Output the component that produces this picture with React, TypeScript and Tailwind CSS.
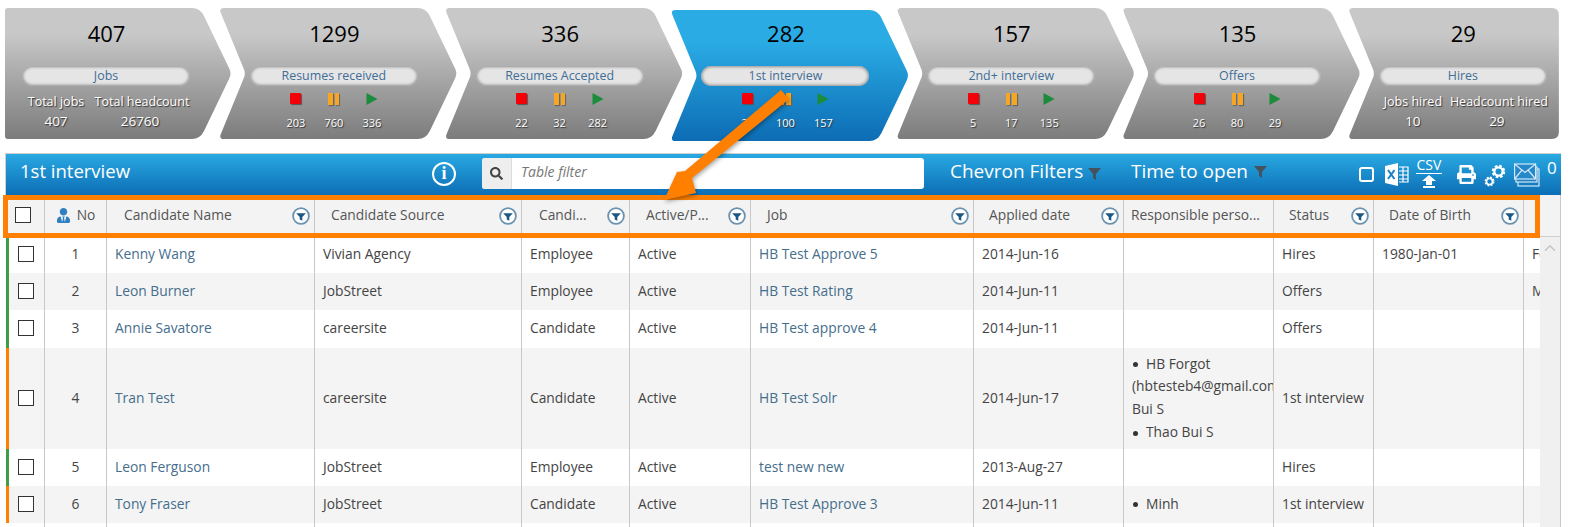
import { FaPrint, FaSearch, FaUserTie } from "react-icons/fa";
import { ChevronUp } from "lucide-react";

const FONT = "font-['Open_Sans','Liberation_Sans',sans-serif]";

const steps = [
  { count: 407, label: "Jobs", kind: "first", totals: [["Total jobs", "407"], ["Total headcount", "26760"]] },
  { count: 1299, label: "Resumes received", kind: "mid", stats: ["203", "760", "336"] },
  { count: 336, label: "Resumes Accepted", kind: "mid", stats: ["22", "32", "282"] },
  { count: 282, label: "1st interview", kind: "mid", active: true, stats: ["25", "100", "157"] },
  { count: 157, label: "2nd+ interview", kind: "mid", stats: ["5", "17", "135"] },
  { count: 135, label: "Offers", kind: "mid", stats: ["26", "80", "29"] },
  { count: 29, label: "Hires", kind: "last", totals: [["Jobs hired", "10"], ["Headcount hired", "29"]] },
];

// shapes of the chevrons
const firstShape = "[clip-path:path('M3_0L187_0Q195_0_199_8L224_60Q227_65.5_224_71L199_123Q195_131_187_131L3_131Q0_131_0_128L0_3Q0_0_3_0Z')]";
const midShape = "[clip-path:path('M4_0L198_0Q206_0_210_8L235_60Q238_65.5_235_71L210_123Q206_131_198_131L4_131Q-1_131_1_126L24_70Q26_65.5_24_61L1_5Q-1_0_4_0Z')]";
const lastShape = "[clip-path:path('M4_0L203_0Q210_0_210_7L210_124Q210_131_203_131L4_131Q-1_131_1_126L24_70Q26_65.5_24_61L1_5Q-1_0_4_0Z')]";

function Chevron({ step }: any) {
  const shape = step.kind === "first" ? firstShape : step.kind === "last" ? lastShape : midShape;
  const width = step.kind === "first" ? "w-[226px] pl-[17px]" : step.kind === "last" ? "w-[210px] pl-[30px] -ml-[11.2px]" : "w-[237px] pl-[30px] -ml-[11.2px]";
  return (
    <div className={`relative h-[131px] shrink-0 ${width}`}>
      <div
        className={`absolute inset-x-0 h-[131px] ${shape} ${
          step.active
            ? "top-[2px] bg-linear-to-b from-[#2aabe4] from-25% to-[#0d6cb4]"
            : "top-0 bg-linear-to-b from-[#c8c8c8] from-20% to-[#7c7c7c]"
        }`}
      />
      <div className="relative w-[168px]">
        <div className="mt-[9px] h-[41px] pl-px pt-px text-center text-[22px] leading-[30px] text-black">{step.count}</div>
        <div className="mt-[8px] h-[20px] rounded-full bg-[#e5e5e5] text-center text-[12.4px] leading-[20px] text-[#3f6d96] shadow-[inset_0_0_3px_1px_#8f8f8f]">
          {step.label}
        </div>
        {step.stats ? (
          <div className="mx-auto w-[114px]">
            <div className="mt-[7px] grid h-[12px] grid-cols-3 justify-items-center">
              <span className="h-[11px] w-[11px] rounded-[1px] bg-[#f40009] shadow-[1px_1px_1px_#555]" />
              <span className="flex h-[12px] gap-[2px]">
                <span className="h-full w-[4.5px] bg-[#f6a623] shadow-[1px_1px_1px_#666]" />
                <span className="h-full w-[4.5px] bg-[#f6a623] shadow-[1px_1px_1px_#666]" />
              </span>
              <svg width="12" height="12" viewBox="0 0 12 12"><path d="M0.5 0 L11.5 6 L0.5 12 Z" fill="#1b8c3c" /></svg>
            </div>
            <div className="mt-[10px] grid grid-cols-3 text-center text-[11px] leading-[16px] text-white [text-shadow:1px_1px_1px_#333]">
              {step.stats.map((s: string, i: number) => <span key={i}>{s}</span>)}
            </div>
          </div>
        ) : (
          <div className="mt-[6px] grid grid-cols-[68px_100px] whitespace-nowrap text-center text-white [text-shadow:1px_1px_1px_#333]">
            <div className="flex justify-center text-[12.5px] leading-[19px]">{step.totals[0][0]}</div>
            <div className="flex justify-center pl-[4px] text-[12.5px] leading-[19px]">{step.totals[1][0]}</div>
            <div className="text-[13.5px] leading-[20px]">{step.totals[0][1]}</div>
            <div className="text-[13.5px] leading-[20px]">{step.totals[1][1]}</div>
          </div>
        )}
      </div>
    </div>
  );
}

function Funnel({ className }: any) {
  return (
    <svg className={className} width="13" height="13" viewBox="0 0 13 13">
      <path d="M0 1 H13 L8 7 V13 L5 11 V7 Z" fill="#44525e" />
    </svg>
  );
}

function FilterIcon() {
  return (
    <svg width="18" height="18" viewBox="0 0 18 18" className="shrink-0">
      <circle cx="9" cy="9" r="7.9" fill="#fff" stroke="#6b93b0" strokeWidth="1.8" />
      <path d="M4.2 6.2 H13.8 L10.3 10 V13.8 L7.7 12.6 V10 Z" fill="#1c5885" />
    </svg>
  );
}

function Gear({ size, className }: any) {
  return (
    <svg className={className} width={size} height={size} viewBox="0 0 20 20">
      <circle cx="10" cy="10" r="7.5" fill="none" stroke="#fff" strokeWidth="3" strokeDasharray="3.4 2.5" />
      <circle cx="10" cy="10" r="5.5" fill="none" stroke="#fff" strokeWidth="3" />
    </svg>
  );
}

function ToolbarIcons() {
  return (
    <div className="relative flex h-full items-center">
      <span className="ml-[92px] h-[15px] w-[15px] rounded-[3px] border-2 border-white" />
      <svg className="ml-[11px]" width="24" height="23" viewBox="0 0 24 23">
        <path d="M0 3 L13 0 V23 L0 20 Z" fill="#fff" />
        <path d="M3 7 L9.5 16 M9.5 7 L3 16" stroke="#1a7fc4" strokeWidth="2" />
        <path d="M14 4 H23 V19 H14 M14 8 H23 M14 12 H23 M14 16 H23 M18 4 V19" stroke="#fff" strokeWidth="1.2" fill="none" />
      </svg>
      <div className="ml-[7px] -mt-[3px] flex w-[26px] flex-col items-center text-white">
        <span className="h-[15px] text-[14px] leading-[14px]">CSV</span>
        <span className="h-px w-[26px] bg-white" />
        <svg className="mt-px" width="18" height="14" viewBox="0 0 18 14"><path d="M9 0 L16 6 H12 V10 H6 V6 H2 Z M3 11 H15 V13 H3 Z" fill="#fff" /></svg>
      </div>
      <FaPrint className="ml-[15px] text-[19px] text-white" />
      <div className="relative ml-[8px] h-[24px] w-[22px]">
        <Gear size={15} className="absolute right-0 top-[1px]" />
        <Gear size={11} className="absolute bottom-0 left-0" />
      </div>
      <svg className="ml-[8px]" width="26" height="24" viewBox="0 0 26 24" fill="none" stroke="#d3e8f6" strokeWidth="1.2">
        <rect x="4" y="6" width="21" height="17" />
        <rect x="2" y="4" width="21" height="15" fill="#2080c4" />
        <rect x="0.6" y="1" width="21" height="15" fill="#2488cb" />
        <path d="M0.6 1 L11 9.5 L21.6 1 M0.6 16 L8 7 M21.6 16 L14 7" />
      </svg>
      <span className="ml-[7px] -mt-[15px] text-[17px] leading-none text-white">0</span>
    </div>
  );
}

const colWidths = [39, 62, 208, 207, 108, 121, 223, 150, 150, 100, 150, 17];

const headers = [
  { label: "Candidate Name", filter: true, pl: "pl-[17px]" },
  { label: "Candidate Source", filter: true, pl: "pl-[16px]" },
  { label: "Candi...", filter: true, pl: "pl-[17px]" },
  { label: "Active/P...", filter: true, pl: "pl-[16px]" },
  { label: "Job", filter: true, pl: "pl-[16px]" },
  { label: "Applied date", filter: true, pl: "pl-[15px]" },
  { label: "Responsible perso...", filter: false, pl: "pl-[7px]" },
  { label: "Status", filter: true, pl: "pl-[15px]" },
  { label: "Date of Birth", filter: true, pl: "pl-[15px]" },
  { label: "", filter: false, pl: "" },
];

const green = "shadow-[inset_1px_0_0_#fff,inset_4px_0_0_#3e9c4b]";
const orange = "shadow-[inset_1px_0_0_#fff,inset_4px_0_0_#ff8000]";

const rows = [
  { no: 1, name: "Kenny Wang", source: "Vivian Agency", type: "Employee", job: "HB Test Approve 5", date: "2014-Jun-16", status: "Hires", dob: "1980-Jan-01", extra: "Female", stripe: green, h: "h-[36px]" },
  { no: 2, name: "Leon Burner", source: "JobStreet", type: "Employee", job: "HB Test Rating", date: "2014-Jun-11", status: "Offers", extra: "Male", stripe: green, h: "h-[37px]" },
  { no: 3, name: "Annie Savatore", source: "careersite", type: "Candidate", job: "HB Test approve 4", date: "2014-Jun-11", status: "Offers", stripe: green, h: "h-[38px]" },
  { no: 4, name: "Tran Test", source: "careersite", type: "Candidate", job: "HB Test Solr", date: "2014-Jun-17", status: "1st interview", people: ["HB Forgot (hbtesteb4@gmail.com) Bui S", "Thao Bui S"], stripe: orange, h: "h-[101px]" },
  { no: 5, name: "Leon Ferguson", source: "JobStreet", type: "Employee", job: "test new new", date: "2013-Aug-27", status: "Hires", stripe: green, h: "h-[37px]" },
  { no: 6, name: "Tony Fraser", source: "JobStreet", type: "Candidate", job: "HB Test Approve 3", date: "2014-Jun-11", status: "1st interview", people: ["Minh"], stripe: orange, h: "h-[37px]" },
];

const tdClass = "overflow-hidden border-l border-[#c8c8c8] pl-2 pb-[1px] align-middle";

export default function App() {
  return (
    <div className={`relative h-[527px] w-[1569px] overflow-hidden bg-white text-[13.8px] text-[#444] ${FONT}`}>
      <div className="flex pl-[5px] pt-[8px]">
        {steps.map((step) => <Chevron key={step.label} step={step} />)}
      </div>

      <div className="ml-[5px] mt-[14px] w-[1556px]">
        {/* blue title bar */}
        <div className="flex h-[42px] items-center border-l border-t border-[#cfcfcf] bg-linear-to-b from-[#29a9e2] to-[#0d6eb5] text-white">
          <div className="w-[426px] pb-[8px] pl-[14px] text-[18.5px]">1st interview</div>
          <span className="mb-[2px] flex h-[24px] w-[24px] items-center justify-center rounded-full border-2 border-white font-['Liberation_Serif',serif] text-[18px] font-bold">i</span>
          <div className="ml-[26px] mb-[2px] flex h-[31px] w-[442px] overflow-hidden rounded-[3px] bg-white">
            <span className="flex w-[30px] items-center justify-center border-r border-[#ddd] bg-[#eee] text-[13px] text-[#444]"><FaSearch /></span>
            <span className="pl-[9px] text-[14px] italic leading-[28px] text-[#777]">Table filter</span>
          </div>
          <div className="ml-[26px] w-[181px] pb-[6px] text-[19px] whitespace-nowrap">
            Chevron Filters<Funnel className="ml-[5px] inline-block" />
          </div>
          <div className="flex items-center whitespace-nowrap pb-[6px] text-[19px]">
            Time to open<Funnel className="ml-[6px]" />
          </div>
          <ToolbarIcons />
        </div>

        <div className="flex">
          <table className="w-[1535px] table-fixed border-separate border-spacing-0">
            <colgroup>
              {colWidths.map((w, i) => <col key={i} style={{ width: w }} />)}
            </colgroup>
            <thead>
              <tr className="h-[42px] bg-[#f3f3f3] font-normal">
                <th className="pb-[2px] pl-[10px] font-normal">
                  <span className="block h-[16px] w-[16px] border border-[#333] bg-white" />
                </th>
                <th className="border-l border-[#c8c8c8] pb-[1px] font-normal">
                  <span className="flex items-center justify-center gap-[6px] text-[#555]">
                    <FaUserTie className="text-[15px] text-[#2f7fc1]" />No
                  </span>
                </th>
                {headers.map((h, i) => (
                  <th key={i} className={`overflow-hidden border-l border-[#c8c8c8] pr-[4px] text-left font-normal text-[#555] ${h.pl}`}>
                    <span className="flex items-center justify-between whitespace-nowrap">
                      <span className="pb-[1px]">{h.label}</span>
                      {h.filter && <FilterIcon />}
                    </span>
                  </th>
                ))}
              </tr>
            </thead>
            <tbody>
              {rows.map((r, i) => (
                <tr key={r.no} className={`${r.h} ${i % 2 === 0 && r.no !== 4 ? "bg-white" : ""} ${i % 2 === 1 || r.no === 4 ? "bg-[#f4f4f4]" : ""}`}>
                  <td className={`pb-[2px] pl-[13px] align-middle ${r.stripe}`}>
                    <span className="block h-[16px] w-[16px] border border-[#333] bg-white" />
                  </td>
                  <td className="border-l border-[#c8c8c8] pb-[1px] text-center align-middle">{r.no}</td>
                  <td className={`${tdClass} text-[#456e8c]`}>{r.name}</td>
                  <td className={tdClass}>{r.source}</td>
                  <td className={tdClass}>{r.type}</td>
                  <td className={tdClass}>Active</td>
                  <td className={`${tdClass} text-[#456e8c]`}>{r.job}</td>
                  <td className={tdClass}>{r.date}</td>
                  <td className={tdClass}>
                    {r.people && (
                      <ul className="leading-[22.7px]">
                        {r.people.map((p) => (
                          <li key={p}>
                            <span className="ml-px mr-[8px] inline-block h-[5px] w-[5px] rounded-full bg-[#333] align-middle" />
                            {p}
                          </li>
                        ))}
                      </ul>
                    )}
                  </td>
                  <td className={tdClass}>{r.status}</td>
                  <td className={tdClass}>{r.dob}</td>
                  <td className={`${tdClass} whitespace-nowrap`}>{r.extra}</td>
                </tr>
              ))}
              <tr className="h-[10px] bg-white">
                <td />
                {colWidths.slice(1).map((w, i) => <td key={i} className="border-l border-[#c8c8c8]" />)}
              </tr>
            </tbody>
          </table>
          <div className="w-[21px] border-r border-[#c8c8c8] bg-[#f0f0f0]">
            <div className="h-[42px] border-b border-[#cfcfcf] bg-[#f3f3f3]" />
            <ChevronUp className="ml-px mt-[2px] h-[18px] w-[18px] text-[#c4c4c4]" />
          </div>
        </div>
      </div>

      {/* callout drawn on top of the screenshot */}
      <div className="absolute left-[3px] top-[195px] h-[43px] w-[1537px] border-[5px] border-[#ff8000]" />
      <svg className="absolute left-0 top-0 drop-shadow-[1px_2px_2px_rgba(0,0,0,0.35)]" width="1569" height="527" viewBox="0 0 1569 527" fill="none">
        <path d="M781 90 L789 99 L692 178 L696 193 L664 200 L677 172 L685 171 Z" fill="#ff8000" />
      </svg>
    </div>
  );
}
